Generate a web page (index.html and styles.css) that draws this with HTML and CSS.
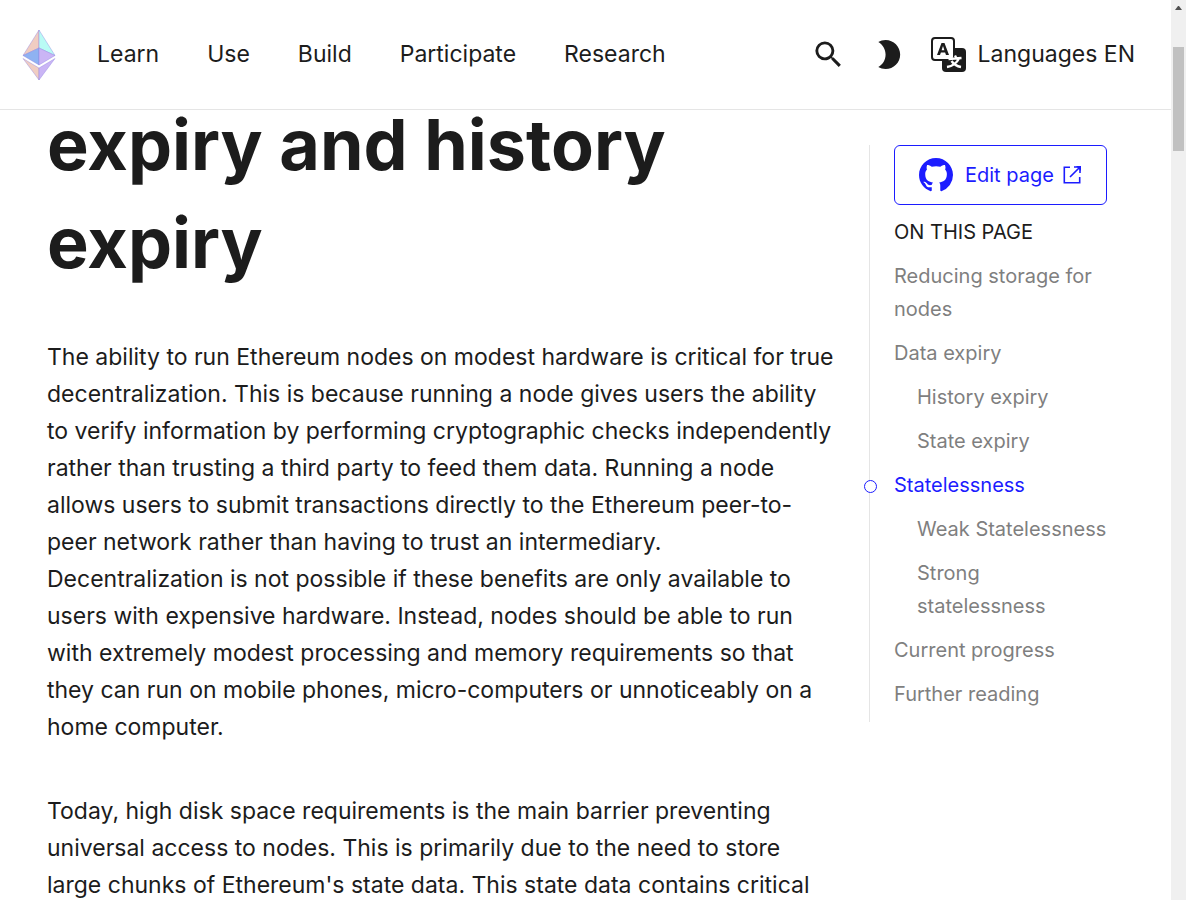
FILE: index.html
```html
<!DOCTYPE html>
<html lang="en">
<head>
<meta charset="utf-8">
<meta name="viewport" content="width=device-width, initial-scale=1">
<title>Statelessness, state expiry and history expiry</title>
<link rel="stylesheet" href="styles.css">
</head>
<body>
<div class="page">
  <header class="header">
    <a class="logo" href="#" aria-label="Home">
      <svg width="34" height="52" viewBox="0 0 34 52" stroke="#8c7fe0" stroke-opacity=".5" stroke-width=".8" stroke-linejoin="round">
        <path fill="#f0cdc2" d="M17 1 1 26.500l16-7.500z"/>
        <path fill="#b9fbf5" d="M17 1l16 25.500-16-7.500z"/>
        <path fill="#8fb2f2" d="M17 19 1 26.500 17 36z"/>
        <path fill="#cab5f5" d="M17 19l16 7.500L17 36z"/>
        <path fill="#f0cdc2" d="M1 29.500 17 39v12z"/>
        <path fill="#cab5f5" d="M33 29.500 17 39v12z"/>
      </svg>
    </a>
    <nav class="nav">
      <button class="nav-item">Learn</button>
      <button class="nav-item">Use</button>
      <button class="nav-item">Build</button>
      <button class="nav-item">Participate</button>
      <a class="nav-item" href="#">Research</a>
    </nav>
    <div class="tools">
      <button class="icon-button" aria-label="Search">
        <svg width="35" height="35" viewBox="0 0 24 24" fill="currentColor"><path d="M15.500 14h-.79l-.28-.27A6.471 6.471 0 0 0 16 9.500 6.500 6.500 0 1 0 9.500 16c1.610 0 3.090-.59 4.230-1.570l.27.28v.79l5 4.990L20.490 19l-4.990-5zm-6 0C7.010 14 5 11.990 5 9.500S7.010 5 9.500 5 14 7.010 14 9.500 11.990 14 9.500 14z"/></svg>
      </button>
      <button class="icon-button" aria-label="Switch to dark theme">
        <svg width="35" height="35" viewBox="0 0 24 24" fill="currentColor"><path d="M10 2c-1.820 0-3.530.5-5 1.350C7.990 5.080 10 8.300 10 12s-2.010 6.920-5 8.650C6.470 21.500 8.180 22 10 22c5.520 0 10-4.480 10-10S15.520 2 10 2z"/></svg>
      </button>
      <a class="languages" href="#">
        <svg width="35" height="35" viewBox="0 0 35 35" fill="none" stroke-linejoin="round">
          <path fill="#1c1c1c" d="M15 11h16a4 4 0 0 1 4 4v16a4 4 0 0 1-4 4H15a4 4 0 0 1-4-4V15a4 4 0 0 1 4-4z"/>
          <rect x="1" y="1" width="22" height="22" rx="3" fill="#fff" stroke="#1c1c1c" stroke-width="2"/>
          <path fill="#1c1c1c" fill-rule="evenodd" d="M10.500 6h3L18 18h-3l-.9-2.600H9.900L9 18H6zM12 9l-1.400 4.300h2.800z"/>
          <path stroke="#fff" stroke-width="2.300" d="M24 18.500l1.300 2.500M17.500 22l13-1M28 21.500c-2 4-5.500 7.500-12 8.500M20.500 24c2 3 5 5.200 9.500 6"/>
        </svg>
        <span>Languages EN</span>
      </a>
    </div>
  </header>
  <div class="content">
    <main class="article">
      <h1>expiry and history expiry</h1>
      <p>The ability to run Ethereum nodes on modest hardware is critical for true decentralization. This is because running a node gives users the ability to verify information by performing cryptographic checks independently rather than trusting a third party to feed them data. Running a node allows users to submit transactions directly to the Ethereum peer-to-peer network rather than having to trust an intermediary. Decentralization is not possible if these benefits are only available to users with expensive hardware. Instead, nodes should be able to run with extremely modest processing and memory requirements so that they can run on mobile phones, micro-computers or unnoticeably on a home computer.</p>
      <p>Today, high disk space requirements is the main barrier preventing universal access to nodes. This is primarily due to the need to store large chunks of Ethereum's state data. This state data contains critical</p>
    </main>
    <aside class="toc">
      <a class="edit" href="#">
        <svg width="34" height="34" viewBox="0 0 16 16" fill="currentColor"><path d="M8 0C3.580 0 0 3.580 0 8c0 3.540 2.290 6.530 5.470 7.590.4.07.55-.17.55-.38 0-.19-.01-.82-.01-1.490-2.010.37-2.530-.49-2.690-.94-.09-.23-.48-.94-.82-1.130-.28-.15-.68-.52-.01-.53.63-.01 1.080.58 1.230.82.72 1.210 1.870.87 2.330.66.07-.52.28-.87.51-1.070-1.780-.2-3.640-.89-3.640-3.950 0-.87.31-1.590.82-2.150-.08-.2-.36-1.020.08-2.120 0 0 .67-.21 2.200.82.64-.18 1.320-.27 2-.27s1.360.09 2 .27c1.530-1.040 2.200-.82 2.200-.82.44 1.100.16 1.920.08 2.120.51.56.82 1.270.82 2.150 0 3.070-1.870 3.750-3.650 3.950.29.25.54.73.54 1.480v2.200c0 .21.15.46.55.38A8.010 8.010 0 0 0 16 8c0-4.420-3.580-8-8-8z"/></svg>
        <span class="edit-label">Edit page
        <svg width="20" height="20" viewBox="0 0 20 20" fill="none" stroke="currentColor" stroke-width="1.600"><path d="M8 2.300H2.300v15.400h15.400V12"/><path d="M12 2h6v6M18 2 8 12"/><path fill="currentColor" stroke="none" d="M14 1h5v5z"/></svg></span>
      </a>
      <h2>ON THIS PAGE</h2>
      <ul class="toc-list">
        <li><a href="#">Reducing storage for nodes</a></li>
        <li><a href="#">Data expiry</a></li>
        <li class="nested"><a href="#">History expiry</a></li>
        <li class="nested"><a href="#">State expiry</a></li>
        <li class="active"><a href="#">Statelessness</a></li>
        <li class="nested"><a href="#">Weak Statelessness</a></li>
        <li class="nested"><a href="#">Strong statelessness</a></li>
        <li><a href="#">Current progress</a></li>
        <li><a href="#">Further reading</a></li>
      </ul>
    </aside>
  </div>
</div>
<div class="scrollbar" aria-hidden="true">
  <svg class="scroll-arrow" width="7" height="4" viewBox="0 0 7 4"><path fill="#505050" d="M3 0h1l3 4H0z"/></svg>
  <div class="scroll-thumb"></div>
</div>
</body>
</html>
```
FILE: styles.css
```css
*,
*::before {
  box-sizing: border-box;
}

body {
  margin: 0;
  height: 100vh;
  display: flex;
  overflow: hidden;
  background: #fff;
  color: #1c1c1c;
  font-family: Inter, "Liberation Sans", sans-serif;
  font-size: 23px;
  line-height: 37px;
}

a {
  color: inherit;
  text-decoration: none;
}

button {
  padding: 0;
  border: 0;
  background: none;
  color: inherit;
  font: inherit;
  cursor: pointer;
}

svg {
  flex: none;
}

.page {
  flex: 1;
  min-width: 0;
}

.header {
  position: sticky;
  top: 0;
  z-index: 1;
  display: flex;
  align-items: center;
  height: 110px;
  padding: 0 36px 0 22px;
  border-bottom: 1px solid #e5e5e5;
  background: #fff;
}

.logo,
.icon-button,
.languages {
  display: flex;
  align-items: center;
}

.nav {
  display: flex;
  gap: 48px;
  margin-left: 41px;
}

.tools {
  display: flex;
  align-items: center;
  gap: 25px;
  margin-left: auto;
}

.languages {
  gap: 12px;
}

.content {
  display: flex;
  align-items: flex-start;
  gap: 30px;
  padding: 0 47px;
}

.article {
  flex: 1;
  min-width: 0;
}

h1 {
  margin: -14px 0 47px;
  font-size: 70px;
  font-weight: 700;
  line-height: 98px;
}

p {
  margin: 0 0 47px;
}

.toc {
  flex: 0 0 255px;
  margin-top: 35px;
  padding: 0 12px 11px 24px;
  border-left: 1px solid #e5e5e5;
  color: #7f7f7f;
  font-size: 20px;
  line-height: 33px;
}

.edit {
  display: inline-flex;
  align-items: center;
  gap: 12px;
  height: 60px;
  padding: 0 24px;
  border: 1px solid #1c1cff;
  border-radius: 6px;
  color: #1c1cff;
}

.edit-label {
  display: flex;
  align-items: center;
  gap: 8px;
}

.toc h2 {
  margin: 11px 0 0;
  color: #1c1c1c;
  font-size: 20px;
  font-weight: 400;
}

.toc-list {
  margin: 0;
  padding: 0;
  list-style: none;
}

.toc-list li {
  position: relative;
  margin-top: 11px;
}

.toc-list .nested {
  margin-left: 23px;
}

.toc-list .active {
  color: #1c1cff;
}

.active::before {
  content: "";
  position: absolute;
  top: 11px;
  left: -30px;
  width: 13px;
  height: 13px;
  border: 1px solid #1c1cff;
  border-radius: 50%;
  background: #fff;
}

.scrollbar {
  flex: 0 0 15px;
  display: flex;
  flex-direction: column;
  align-items: center;
  gap: 37px;
  padding-top: 6px;
  background: #f0f0f0;
}

.scroll-thumb {
  width: 11px;
  height: 104px;
  background: #c1c1c1;
}
```
